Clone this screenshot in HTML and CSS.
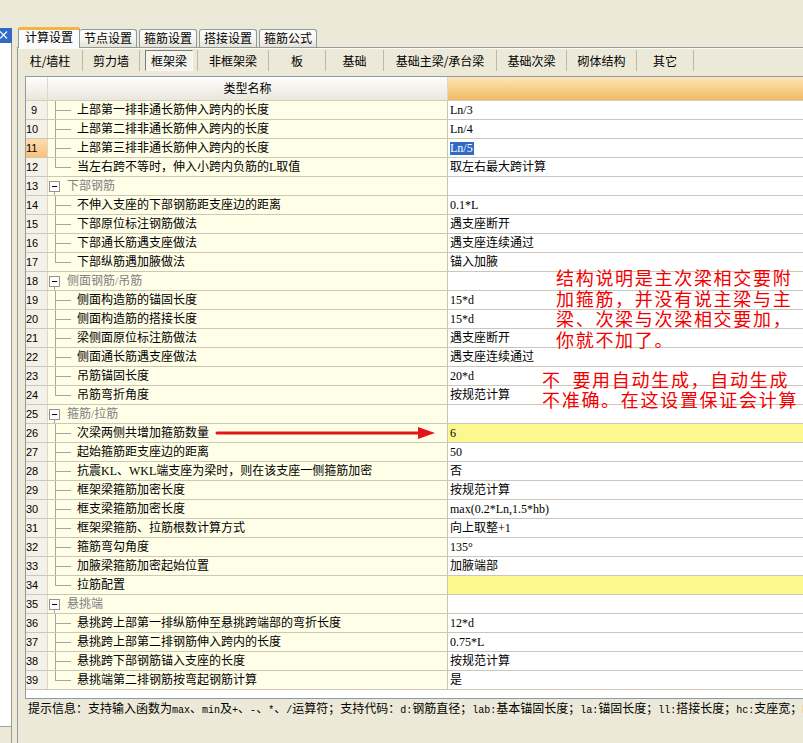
FILE: index.html
```html
<!DOCTYPE html>
<html lang="zh-CN">
<head>
<meta charset="utf-8">
<title>计算设置</title>
<link rel="stylesheet" href="styles.css">
</head>
<body>
<div class="window">
  <div class="side">
    <div class="close"><svg width="12" height="15" viewBox="0 0 12 15"><path d="M0 3.5 L7 10.5 M7 3.5 L0 10.5" stroke="#fff" stroke-width="1.2" fill="none"/></svg></div>
    <div class="side-panel"><div class="side-white"></div></div>
  </div>
  <div class="main">
    <div class="tabs">
      <div class="tab active">计算设置</div>
      <div class="tab first">节点设置</div>
      <div class="tab">箍筋设置</div>
      <div class="tab">搭接设置</div>
      <div class="tab">箍筋公式</div>
    </div>
    <div class="panel">
      <div class="subtabs">
        <div class="sub w65">柱/墙柱</div>
        <div class="sub w57">剪力墙</div>
        <div class="sub w58"><span class="pressed">框架梁</span></div>
        <div class="sub w71">非框架梁</div>
        <div class="sub w57">板</div>
        <div class="sub w58">基础</div>
        <div class="sub w113">基础主梁/承台梁</div>
        <div class="sub w70">基础次梁</div>
        <div class="sub w70">砌体结构</div>
        <div class="sub w57">其它</div>
      </div>
      <div class="grid">
        <div class="ghead"><div class="n"></div><div class="t">类型名称</div><div class="v"></div></div>
        <div class="row"><div class="n">9</div><div class="t"><i class="tree mid"></i>上部第一排非通长筋伸入跨内的长度</div><div class="v">Ln/3</div></div>
        <div class="row"><div class="n">10</div><div class="t"><i class="tree mid"></i>上部第二排非通长筋伸入跨内的长度</div><div class="v">Ln/4</div></div>
        <div class="row"><div class="n hl">11</div><div class="t"><i class="tree mid"></i>上部第三排非通长筋伸入跨内的长度</div><div class="v"><span class="sel">Ln/5</span></div></div>
        <div class="row"><div class="n">12</div><div class="t"><i class="tree end"></i>当左右跨不等时，伸入小跨内负筋的L取值</div><div class="v">取左右最大跨计算</div></div>
        <div class="row grp"><div class="n">13</div><div class="t"><i class="box"></i><span class="gname">下部钢筋</span></div><div class="v"></div></div>
        <div class="row"><div class="n">14</div><div class="t"><i class="tree mid"></i>不伸入支座的下部钢筋距支座边的距离</div><div class="v">0.1*L</div></div>
        <div class="row"><div class="n">15</div><div class="t"><i class="tree mid"></i>下部原位标注钢筋做法</div><div class="v">遇支座断开</div></div>
        <div class="row"><div class="n">16</div><div class="t"><i class="tree mid"></i>下部通长筋遇支座做法</div><div class="v">遇支座连续通过</div></div>
        <div class="row"><div class="n">17</div><div class="t"><i class="tree end"></i>下部纵筋遇加腋做法</div><div class="v">锚入加腋</div></div>
        <div class="row grp"><div class="n">18</div><div class="t"><i class="box"></i><span class="gname">侧面钢筋/吊筋</span></div><div class="v"></div></div>
        <div class="row"><div class="n">19</div><div class="t"><i class="tree mid"></i>侧面构造筋的锚固长度</div><div class="v">15*d</div></div>
        <div class="row"><div class="n">20</div><div class="t"><i class="tree mid"></i>侧面构造筋的搭接长度</div><div class="v">15*d</div></div>
        <div class="row"><div class="n">21</div><div class="t"><i class="tree mid"></i>梁侧面原位标注筋做法</div><div class="v">遇支座断开</div></div>
        <div class="row"><div class="n">22</div><div class="t"><i class="tree mid"></i>侧面通长筋遇支座做法</div><div class="v">遇支座连续通过</div></div>
        <div class="row"><div class="n">23</div><div class="t"><i class="tree mid"></i>吊筋锚固长度</div><div class="v">20*d</div></div>
        <div class="row"><div class="n">24</div><div class="t"><i class="tree end"></i>吊筋弯折角度</div><div class="v">按规范计算</div></div>
        <div class="row grp"><div class="n">25</div><div class="t"><i class="box"></i><span class="gname">箍筋/拉筋</span></div><div class="v"></div></div>
        <div class="row"><div class="n">26</div><div class="t"><i class="tree mid"></i>次梁两侧共增加箍筋数量</div><div class="v yel">6</div></div>
        <div class="row"><div class="n">27</div><div class="t"><i class="tree mid"></i>起始箍筋距支座边的距离</div><div class="v">50</div></div>
        <div class="row"><div class="n">28</div><div class="t"><i class="tree mid"></i>抗震KL、WKL端支座为梁时，则在该支座一侧箍筋加密</div><div class="v">否</div></div>
        <div class="row"><div class="n">29</div><div class="t"><i class="tree mid"></i>框架梁箍筋加密长度</div><div class="v">按规范计算</div></div>
        <div class="row"><div class="n">30</div><div class="t"><i class="tree mid"></i>框支梁箍筋加密长度</div><div class="v">max(0.2*Ln,1.5*hb)</div></div>
        <div class="row"><div class="n">31</div><div class="t"><i class="tree mid"></i>框架梁箍筋、拉筋根数计算方式</div><div class="v">向上取整+1</div></div>
        <div class="row"><div class="n">32</div><div class="t"><i class="tree mid"></i>箍筋弯勾角度</div><div class="v">135°</div></div>
        <div class="row"><div class="n">33</div><div class="t"><i class="tree mid"></i>加腋梁箍筋加密起始位置</div><div class="v">加腋端部</div></div>
        <div class="row"><div class="n">34</div><div class="t"><i class="tree end"></i>拉筋配置</div><div class="v yel"></div></div>
        <div class="row grp"><div class="n">35</div><div class="t"><i class="box"></i><span class="gname">悬挑端</span></div><div class="v"></div></div>
        <div class="row"><div class="n">36</div><div class="t"><i class="tree mid"></i>悬挑跨上部第一排纵筋伸至悬挑跨端部的弯折长度</div><div class="v">12*d</div></div>
        <div class="row"><div class="n">37</div><div class="t"><i class="tree mid"></i>悬挑跨上部第二排钢筋伸入跨内的长度</div><div class="v">0.75*L</div></div>
        <div class="row"><div class="n">38</div><div class="t"><i class="tree mid"></i>悬挑跨下部钢筋锚入支座的长度</div><div class="v">按规范计算</div></div>
        <div class="row"><div class="n">39</div><div class="t"><i class="tree end"></i>悬挑端第二排钢筋按弯起钢筋计算</div><div class="v">是</div></div>
        <div class="gfill"></div>
      </div>
      <div class="hint">提示信息：支持输入函数为<span class="a">max</span>、<span class="a">min</span>及<span class="a">+</span>、<span class="a">-</span>、<span class="a">*</span>、<span class="a">/</span>运算符；支持代码：<span class="a">d:</span>钢筋直径；<span class="a">lab:</span>基本锚固长度；<span class="a">la:</span>锚固长度；<span class="a">ll:</span>搭接长度；<span class="a">hc:</span>支座宽；<span class="a">hb:</span>梁高</div>
    </div>
  </div>
</div>
<div class="note note1">结构说明是主次梁相交要附<br>加箍筋，并没有说主梁与主<br>梁、次梁与次梁相交要加，<br>你就不加了。</div>
<div class="note note2">不&#8194;要用自动生成，自动生成<br>不准确。在这设置保证会计算</div>
<svg class="arrow" width="222" height="14" viewBox="0 0 222 14"><path d="M2 7 L206 7" stroke="#e8121b" stroke-width="3" stroke-linecap="round"/><polygon points="203,1 220,7 203,13" fill="#e8121b"/></svg>
</body>
</html>
```
FILE: styles.css
```css
body {
  margin: 0;
  width: 803px;
  height: 743px;
  overflow: hidden;
  position: relative;
  background: #ece9d8;
  color: #000;
  font: 12px "Liberation Serif", "Noto Sans CJK SC", serif;
}

.window {
  display: flex;
  height: 743px;
}

/* left docked panel */
.side {
  width: 12px;
  flex: none;
  display: flex;
  flex-direction: column;
  padding-top: 28px;
}
.close {
  height: 15px;
  background: #3169c6;
  display: flex;
}
.side-panel {
  flex: 1;
  border-right: 1px solid #9d9b90;
}
.side-white {
  height: 683px;
  background: #fff;
  border-bottom: 1px solid #a3a091;
}

.main {
  flex: 1;
  min-width: 0;
  margin-left: 5px;
  display: flex;
  flex-direction: column;
}

/* top tabs */
.tabs {
  height: 47px;
  flex: none;
  display: flex;
  align-items: flex-end;
  padding-left: 1px;
  font-family: "Noto Sans CJK SC", sans-serif;
}
.tab {
  box-sizing: border-box;
  width: 58px;
  height: 18px;
  margin-left: 2px;
  border: 1px solid #919b9c;
  border-bottom: none;
  border-radius: 3px 3px 0 0;
  background: linear-gradient(#ffffff, #f5f4ef 55%, #e4e2d8);
  text-align: center;
  line-height: 15px;
}
.tab.first {
  margin-left: 0;
  width: 57px;
  border-left: none;
}
.tab.active {
  width: 62px;
  height: 21px;
  margin-left: 0;
  margin-bottom: -1px;
  border-top: 3px solid #f5b441;
  border-radius: 2px 2px 0 0;
  background: #fcfcfb;
  position: relative;
  z-index: 1;
  line-height: 14px;
}

.panel {
  flex: 1;
  min-height: 0;
  overflow: hidden;
  border-left: 1px solid #919b9c;
  border-top: 1px solid #919b9c;
  display: flex;
  flex-direction: column;
}

/* sub tabs */
.subtabs {
  height: 27px;
  flex: none;
  box-sizing: border-box;
  padding-top: 1px;
  border-top: 1px solid #fbfbf8;
  display: flex;
  align-items: flex-start;
  font-family: "Noto Sans CJK SC", sans-serif;
}
.subtabs {
  height: 28px;
}
.sub {
  box-sizing: border-box;
  height: 21px;
  border-right: 1px solid #bdb9a9;
  display: flex;
  align-items: center;
  justify-content: center;
  flex: none;
  line-height: 16px;
}
.w57 { width: 57px; }
.w58 { width: 58px; }
.w65 { width: 65px; }
.w70 { width: 70px; }
.w71 { width: 71px; }
.w113 { width: 113px; }
.pressed {
  box-sizing: border-box;
  width: 48px;
  height: 21px;
  margin-left: 1px;
  border: 1px solid;
  border-color: #7d7a6f #f8f8f5 #f8f8f5 #7d7a6f;
  background: #f4f3ee;
  display: flex;
  align-items: center;
  justify-content: center;
}

/* grid */
.grid {
  flex: none;
  width: 820px;
  margin-left: 7px;
  border: 1px solid #8e9aa6;
  border-right: none;
  background: #fff;
}
.ghead {
  display: flex;
  height: 23px;
  border-bottom: 1px solid #d3cfbf;
}
.ghead .n {
  width: 22px;
  flex: none;
  box-sizing: border-box;
  border-right: 1px solid #dcd9cc;
  background: linear-gradient(#fefefd, #e8e6dc);
}
.ghead .t {
  width: 400px;
  flex: none;
  box-sizing: border-box;
  border-right: 1px solid #dcd9cc;
  background: linear-gradient(#fdfdfb, #e9e7dd);
  text-align: center;
  line-height: 22px;
  font-family: "Noto Sans CJK SC", sans-serif;
}
.ghead .v {
  flex: 1;
  background: linear-gradient(#fde5b8, #f7cf8a 50%, #f2bb63);
}

.row {
  display: flex;
  height: 18px;
  line-height: 18px;
  border-bottom: 1px solid #cbc8b9;
  white-space: nowrap;
}
.row .n {
  width: 22px;
  flex: none;
  box-sizing: border-box;
  padding-right: 10px;
  border-right: 1px solid #dcd8c8;
  background: #f4f2e8;
  text-align: right;
  font: 11px/18px "Liberation Sans", sans-serif;
}
.row .n.hl {
  background: linear-gradient(#fddcae, #f9c27c);
}
.row .t {
  width: 400px;
  flex: none;
  box-sizing: border-box;
  border-right: 1px solid #c9c5b5;
  background: #ffffe8;
  display: flex;
  align-items: center;
  overflow: hidden;
}
.row .v {
  flex: 1;
  padding-left: 2px;
  background: #fff;
}
.row .v.yel {
  background: #fcf88f;
}
.sel {
  display: inline-block;
  line-height: 13px;
  padding: 0 1px 0 0;
  background: #316ac5;
  color: #fff;
}

.tree {
  width: 29px;
  height: 18px;
  flex: none;
}
.tree.mid {
  background:
    linear-gradient(#a6a6a6, #a6a6a6) 7px 0 / 1px 18px no-repeat,
    linear-gradient(#a6a6a6, #a6a6a6) 7px 9px / 16px 1px no-repeat;
}
.tree.end {
  background:
    linear-gradient(#a6a6a6, #a6a6a6) 7px 0 / 1px 10px no-repeat,
    linear-gradient(#a6a6a6, #a6a6a6) 7px 9px / 16px 1px no-repeat;
}
.box {
  position: relative;
  box-sizing: border-box;
  width: 11px;
  height: 11px;
  margin-left: 1px;
  border: 1px solid #939393;
  background: #fff;
  flex: none;
}
.box::before {
  content: "";
  position: absolute;
  left: 2px;
  top: 4px;
  width: 5px;
  height: 1px;
  background: #000;
}
.box::after {
  content: "";
  position: absolute;
  left: 4px;
  top: 10px;
  width: 1px;
  height: 5px;
  background: #a6a6a6;
}
.gname {
  margin-left: 7px;
  color: #808080;
}
.gfill {
  height: 8px;
  background: #fff;
}

.hint {
  height: 18px;
  line-height: 18px;
  padding-left: 10px;
  white-space: nowrap;
  flex: none;
  font-family: "Noto Sans CJK SC", sans-serif;
}
.hint .a {
  font: 10px "Liberation Mono", monospace;
}

/* annotations drawn over the screenshot */
.note {
  position: absolute;
  color: #f20000;
  font: 18px/20.5px "Noto Sans CJK SC", sans-serif;
  letter-spacing: 1.7px;
  white-space: nowrap;
}
.note1 {
  left: 556px;
  top: 267px;
}
.note2 {
  left: 542px;
  top: 369px;
  line-height: 20px;
}
.arrow {
  position: absolute;
  left: 215px;
  top: 426px;
}
```
